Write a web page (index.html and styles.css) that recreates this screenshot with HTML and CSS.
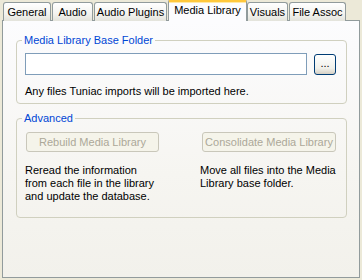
FILE: index.html
```html
<!DOCTYPE html>
<html>
<head>
    <title>Preferences - Media Library</title>
    <link rel="stylesheet" href="styles.css">
</head>
<body>
<div class="dialog">
    <div class="tabs">
        <div class="tab tab-general">General</div>
        <div class="tab tab-audio">Audio</div>
        <div class="tab tab-plugins">Audio Plugins</div>
        <div class="tab tab-media active">Media Library</div>
        <div class="tab tab-visuals">Visuals</div>
        <div class="tab tab-assoc">File Assoc</div>
    </div>

    <div class="page">
        <fieldset class="group group-folder">
            <legend>Media Library Base Folder</legend>
            <div class="folder_row">
                <input class="folder_input" type="text">
                <button class="browse">...</button>
            </div>
            <div class="hint">Any files Tuniac imports will be imported here.</div>
        </fieldset>

        <fieldset class="group group-advanced">
            <legend>Advanced</legend>
            <div class="advanced_grid">
                <div class="col">
                    <button class="xp_button rebuild" disabled>Rebuild Media Library</button>
                    <p class="desc">Reread the information<br>from each file in the library<br>and update the database.</p>
                </div>
                <div class="col">
                    <button class="xp_button consolidate" disabled>Consolidate Media Library</button>
                    <p class="desc">Move all files into the Media<br>Library base folder.</p>
                </div>
            </div>
        </fieldset>
    </div>
</div>
</body>
</html>
```

FILE: styles.css
```css
body {
  margin: 0;
  background-color: #ECE9D8;
  color: #000000;
  font-family: "Liberation Sans", Arial, sans-serif;
  font-size: 11px;
}

.dialog {
  width: 358px;
  padding-left: 2px;
}

.tabs {
  display: flex;
  align-items: flex-end;
  height: 20px;
  padding-left: 1px;
  position: relative;
  z-index: 1;
}

.tab {
  box-sizing: border-box;
  height: 19px;
  margin-right: 1px;
  margin-bottom: -1px;
  border: 1px solid #919B9C;
  border-bottom: none;
  border-radius: 3px 3px 0 0;
  background: linear-gradient(#FFFFFF, #F3F3EF 60%, #E3E3DB);
  text-align: center;
  line-height: 19px;
  white-space: nowrap;
}

.tab-general { width: 48px; }
.tab-audio { width: 41px; }
.tab-plugins { width: 73px; }
.tab-media { width: 79px; }
.tab-visuals { width: 41px; margin-right: 1px; }
.tab-assoc { width: 57px; }

.tab.active {
  height: 22px;
  margin-right: 0;
  border-top: 3px solid #FFC83C;
  box-shadow: inset 0 1px 0 #FFE8A6;
  background: #FCFCFE;
  line-height: 16px;
}

.page {
  box-sizing: border-box;
  height: 258px;
  border: 1px solid #919B9C;
  background: linear-gradient(#FCFCFE, #F6F5F1 60%, #F2F1EB);
  padding: 13px 12px 0 13px;
}

.group {
  margin: 0;
  padding: 0 8px 0 8px;
  border: 1px solid #D0D0BF;
  border-radius: 4px;
}

.group legend {
  margin-left: -3px;
  padding: 0 2px;
  color: #0046D5;
  line-height: 13px;
}

.group-folder {
  padding-bottom: 5px;
}

.folder_row {
  display: flex;
  align-items: center;
  gap: 7px;
  margin-top: 6px;
}

.folder_input {
  box-sizing: border-box;
  width: 282px;
  height: 22px;
  margin: 0;
  border: 1px solid #7F9DB9;
  background: #FFFFFF;
}

.browse {
  box-sizing: border-box;
  width: 22px;
  height: 21px;
  padding: 0 0 3px 0;
  border: 1px solid #003C74;
  border-radius: 3px;
  background: linear-gradient(#FFFFFF, #F0F0EA 70%, #D6D0C5);
  font-family: "Liberation Sans", Arial, sans-serif;
  font-size: 11px;
  line-height: 16px;
}

.hint {
  margin-top: 10px;
  line-height: 13px;
}

.group-advanced {
  margin-top: 8px;
  padding-bottom: 14px;
}

.advanced_grid {
  display: grid;
  grid-template-columns: 175px 1fr;
  margin-top: 7px;
}

.xp_button {
  box-sizing: border-box;
  height: 20px;
  padding: 0;
  border: 1px solid #C9C7BA;
  border-radius: 3px;
  background: #F5F4EA;
  color: #ACA899;
  font-family: "Liberation Sans", Arial, sans-serif;
  font-size: 11px;
}

.rebuild {
  width: 133px;
  margin-left: 1px;
}

.consolidate {
  width: 134px;
  margin-left: 2px;
}

.desc {
  margin: 12px 0 0 0;
  line-height: 13px;
}
```
